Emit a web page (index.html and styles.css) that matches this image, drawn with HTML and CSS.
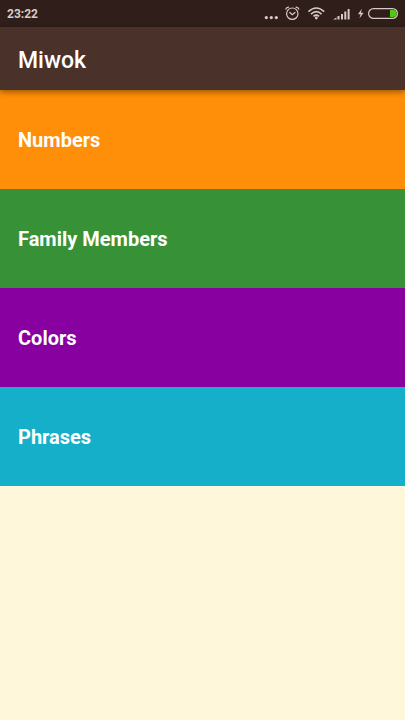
FILE: index.html
```html
<!DOCTYPE html>
<html lang="en">
<head>
<meta charset="utf-8">
<meta name="viewport" content="width=device-width, initial-scale=1">
<title>Miwok</title>
<link rel="stylesheet" href="styles.css">
</head>
<body>
<div class="status-bar">
  <time class="clock">23:22</time>
  <svg class="status-icons" width="136" height="21" viewBox="0 0 136 21" fill="none" aria-hidden="true">
    <g fill="#d6cbc8">
      <circle cx="4.300" cy="14.600" r="1.600"/>
      <circle cx="9.300" cy="14.600" r="1.600"/>
      <circle cx="14.300" cy="14.600" r="1.600"/>
    </g>
    <g stroke="#d6cbc8" stroke-width="1.200" stroke-linecap="round" stroke-linejoin="round">
      <circle cx="30.300" cy="10.700" r="5.700"/>
      <path d="M27.800 9.500 30.300 11.700 33 9.500M23.800 6.200Q24.300 4.400 26.500 4.200M36.800 6.200Q36.300 4.400 34.100 4.200"/>
    </g>
    <path d="M46.400 8.600Q54.300 1.400 62.200 8.600M49 11.100Q54.300 6.200 59.600 11.100M51.500 13.300Q54.300 10.900 57.100 13.300" stroke="#d6cbc8" stroke-width="1.600"/>
    <circle cx="54.300" cy="15" r="1.400" fill="#d6cbc8"/>
    <path d="M71 16.500 74.500 14.500v2zM75.500 13h2v3.500h-2zM79 11h2v5.500h-2zM82.300 8.500h2v8h-2zM85.600 6h2v10.500h-2z" fill="#d6cbc8"/>
    <path d="M99.800 5.800 96 11.200h2.600L97.400 15.400 101.600 9.700h-2.700Z" fill="#d6cbc8"/>
    <rect x="106.600" y="5.600" width="28.800" height="9.800" rx="4.900" stroke="#d6cbc8" stroke-width="1.200"/>
    <path d="M128 7h3a3.500 3.500 0 0 1 0 7h-3z" fill="#4ecb0c"/>
  </svg>
</div>
<header class="app-bar"><h1>Miwok</h1></header>
<nav class="categories" aria-label="Categories">
  <a class="category numbers" href="#numbers">Numbers</a>
  <a class="category family" href="#family">Family Members</a>
  <a class="category colors" href="#colors">Colors</a>
  <a class="category phrases" href="#phrases">Phrases</a>
</nav>
</body>
</html>
```
FILE: styles.css
```css
* {
  box-sizing: border-box;
}

body {
  margin: 0;
  min-height: 100vh;
  background: #fff7da;
  color: #fff;
  font-family: Roboto, sans-serif;
}

.status-bar {
  display: flex;
  align-items: center;
  justify-content: space-between;
  height: 27px;
  padding: 0 7px;
  background: #2f1e1a;
}

.clock {
  color: #d6cbc8;
  font-size: 12px;
  font-weight: 700;
  line-height: 16px;
}

.app-bar {
  position: relative;
  display: flex;
  align-items: center;
  height: 63px;
  padding: 4px 18px 0;
  background: #4a312a;
  box-shadow: 0 2px 6px rgba(0, 0, 0, 0.4);
}

.app-bar h1 {
  margin: 0;
  font-size: 23px;
  font-weight: 500;
  line-height: 28px;
}

.categories {
  display: flex;
  flex-direction: column;
}

.category {
  display: flex;
  align-items: center;
  height: 99px;
  padding: 0 18px;
  color: inherit;
  font-size: 20px;
  font-weight: 700;
  line-height: 24px;
  text-decoration: none;
}

.numbers {
  background: #ff8e09;
}

.family {
  background: #379237;
}

.colors {
  background: #8800a0;
}

.phrases {
  background: #16afca;
}
```
